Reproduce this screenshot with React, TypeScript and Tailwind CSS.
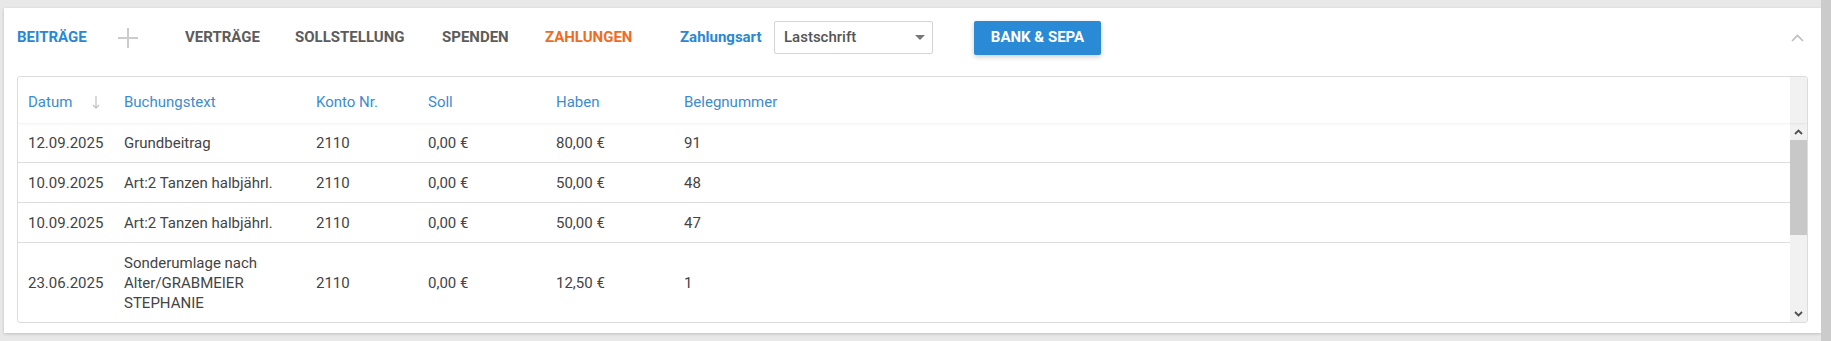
import React from "react";

const font = { fontFamily: 'Roboto, "Liberation Sans", Arial, sans-serif' };

type Row = {
  datum: string;
  text: string;
  konto: string;
  soll: string;
  haben: string;
  beleg: string;
  tall?: boolean;
};

const rows: Row[] = [
  { datum: "12.09.2025", text: "Grundbeitrag", konto: "2110", soll: "0,00 €", haben: "80,00 €", beleg: "91" },
  { datum: "10.09.2025", text: "Art:2 Tanzen halbjährl.", konto: "2110", soll: "0,00 €", haben: "50,00 €", beleg: "48" },
  { datum: "10.09.2025", text: "Art:2 Tanzen halbjährl.", konto: "2110", soll: "0,00 €", haben: "50,00 €", beleg: "47" },
  {
    datum: "23.06.2025",
    text: "Sonderumlage nach Alter/GRABMEIER STEPHANIE",
    konto: "2110",
    soll: "0,00 €",
    haben: "12,50 €",
    beleg: "1",
    tall: true,
  },
];

function Tab({ label, width, active }: { label: string; width: string; active?: "blue" | "orange" }) {
  const color =
    active === "blue" ? "text-[#2a87d4]" : active === "orange" ? "text-[#ee6c1f]" : "text-[#5c5c5c]";
  return <div className={`${width} shrink-0 text-[15px] font-bold uppercase ${color}`}>{label}</div>;
}

function Chevron({ dir, className }: { dir: "up" | "down"; className?: string }) {
  return (
    <svg width="9" height="6" viewBox="0 0 9 6" className={className}>
      <path
        d={dir === "up" ? "M1 5 L4.5 1.5 L8 5" : "M1 1 L4.5 4.5 L8 1"}
        fill="none"
        stroke="currentColor"
        strokeWidth="1.8"
      />
    </svg>
  );
}

export default function App() {
  return (
    <div className="flex w-full h-[341px] bg-[#e8e8e8] overflow-hidden" style={font}>
      <div className="flex-1 pl-[4px] pt-[8px]">
        <div className="flex flex-col h-[325px] bg-white px-[13px] pb-[10px] shadow-[0_1px_3px_rgba(0,0,0,0.18)]">
          {/* Tabs */}
          <div className="flex items-center h-[59px] shrink-0">
            <Tab label="Beiträge" width="w-[101px]" active="blue" />
            <div className="w-[67px] shrink-0">
              <svg width="20" height="20" viewBox="0 0 20 20">
                <path d="M10 0 V20 M0 10 H20" stroke="#cccccc" strokeWidth="2" />
              </svg>
            </div>
            <Tab label="Verträge" width="w-[110px]" />
            <Tab label="Sollstellung" width="w-[147px]" />
            <Tab label="Spenden" width="w-[103px]" />
            <Tab label="Zahlungen" width="w-[135px]" active="orange" />
            <div className="w-[94px] shrink-0 text-[15px] font-bold text-[#2a87d4]">Zahlungsart</div>
            <div className="flex items-center justify-between w-[159px] h-[33px] shrink-0 border border-[#d4d4d4] rounded-[2px] pl-[9px] pr-[7px]">
              <span className="text-[15px] font-medium text-[#555]">Lastschrift</span>
              <svg width="10" height="6" viewBox="0 0 10 6">
                <path d="M0 0 H10 L5 5 Z" fill="#777" />
              </svg>
            </div>
            <button className="ml-[41px] w-[127px] h-[34px] shrink-0 rounded-[2px] bg-[#2a8ad6] text-white text-[15px] font-bold shadow-[0_2px_5px_rgba(0,0,0,0.2)]">
              BANK &amp; SEPA
            </button>
            <div className="ml-auto mr-[4px] text-[#bdbdbd]">
              <svg width="13" height="8" viewBox="0 0 13 8">
                <path d="M1 7 L6.5 1.5 L12 7" fill="none" stroke="currentColor" strokeWidth="1.6" />
              </svg>
            </div>
          </div>

          {/* Table */}
          <div className="mt-[9px] flex flex-col h-[247px] border border-[#dcdcdc] rounded-[3px] overflow-hidden text-[15px] leading-[20px]">
            <div className="flex h-[46px] shrink-0 shadow-[0_1px_2px_rgba(0,0,0,0.06)] z-10">
              <div className="flex flex-1 items-center pt-[4px] text-[#3c8ccf]">
                <div className="flex w-[96px] pl-[10px] items-center">
                  <span>Datum</span>
                  <svg width="8" height="13" viewBox="0 0 8 13" className="ml-[20px]">
                    <path d="M4 0 V12 M1 9 L4 12 L7 9" fill="none" stroke="#c4c4c4" strokeWidth="1.3" />
                  </svg>
                </div>
                <div className="w-[192px] pl-[10px]">Buchungstext</div>
                <div className="w-[112px] pl-[10px]">Konto Nr.</div>
                <div className="w-[128px] pl-[10px]">Soll</div>
                <div className="w-[128px] pl-[10px]">Haben</div>
                <div className="flex-1 pl-[10px]">Belegnummer</div>
              </div>
              <div className="w-[17px] bg-[#f1f1f1]" />
            </div>

            <div className="flex flex-1 min-h-0">
              <div className="flex-1 flex flex-col text-[#444]">
                {rows.map((r, i) => (
                  <div
                    key={i}
                    className={`flex items-center shrink-0 border-b border-[#dedede] ${r.tall ? "h-[80px]" : "h-[40px]"}`}
                  >
                    <div className="w-[96px] pl-[10px]">{r.datum}</div>
                    <div className="w-[192px] pl-[10px] pr-[10px]">{r.text}</div>
                    <div className="w-[112px] pl-[10px]">{r.konto}</div>
                    <div className="w-[128px] pl-[10px]">{r.soll}</div>
                    <div className="w-[128px] pl-[10px]">{r.haben}</div>
                    <div className="flex-1 pl-[10px]">{r.beleg}</div>
                  </div>
                ))}
              </div>
              <div className="flex flex-col w-[17px] bg-[#f1f1f1] text-[#505050]">
                <div className="flex h-[17px] items-center justify-center">
                  <Chevron dir="up" />
                </div>
                <div className="h-[95px] bg-[#c8c8c8]" />
                <div className="flex-1" />
                <div className="flex h-[17px] items-center justify-center">
                  <Chevron dir="down" />
                </div>
              </div>
            </div>
          </div>
        </div>
      </div>
      <div className="w-[10px] bg-[#cbcbcb]" />
    </div>
  );
}
